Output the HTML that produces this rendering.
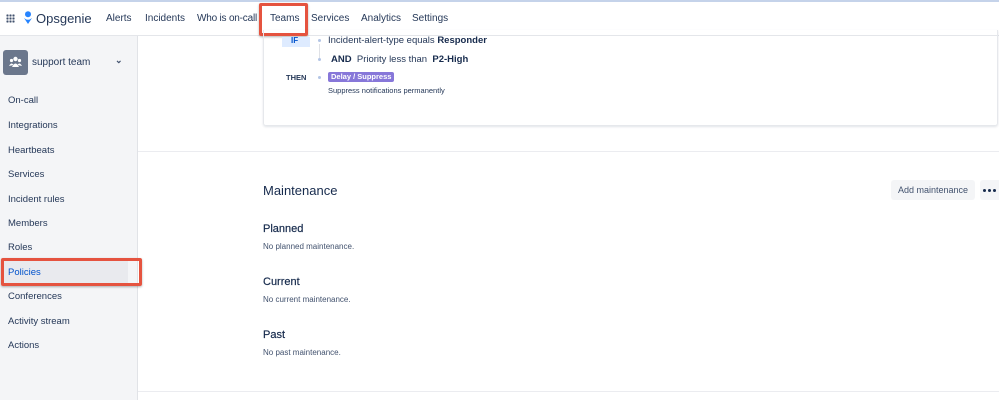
<!DOCTYPE html>
<html><head><style>
*{margin:0;padding:0;box-sizing:border-box}
body{width:999px;height:400px;overflow:hidden;font-family:"Liberation Sans",sans-serif;background:#fff;color:#172b4d;position:relative;font-size:10px}
.a{position:absolute;white-space:nowrap}
.top{position:absolute;left:0;top:0;width:999px;height:36px;border-top:2px solid #c5d3ea;border-bottom:1px solid #e4e6ea;background:#fff}
.nav{top:13px;font-size:10px;color:#253858}
.side{position:absolute;left:0;top:36px;width:138px;height:364px;background:#f4f5f7;border-right:1px solid #e1e3e7}
.si{left:8px;font-size:9.5px;color:#253858}
.red{position:absolute;border:3px solid #e5533f;border-radius:2px}
.card{position:absolute;left:263px;top:30px;width:735px;height:96px;border:1px solid #e6e8ec;border-top:none;border-radius:0 0 3px 3px;box-shadow:0 1px 2px rgba(9,30,66,.12)}
.hr{position:absolute;left:138px;width:861px;height:1px;background:#ebecf0}
h3{font-size:11px;font-weight:normal;color:#172b4d;-webkit-text-stroke:0.2px #172b4d}
.sm{font-size:8px;color:#42526e}
</style></head><body>
<div class="top"></div>
<div class="a" style="left:6px;top:14px;width:9px;height:9px;background:
radial-gradient(circle,#42526e 1px,transparent 1.3px) 0 0/3px 3px"></div>
<svg class="a" style="left:23px;top:11px" width="10" height="13" viewBox="0 0 10 13"><circle cx="5" cy="3.2" r="3" fill="#2684ff"/><path d="M1 7 Q5 10.5 9 7 L5 13 Z" fill="#2684ff"/></svg>
<div class="a" style="left:36px;top:11px;font-size:13px;color:#253858">Opsgenie</div>
<div class="a nav" style="left:106px">Alerts</div>
<div class="a nav" style="left:145px">Incidents</div>
<div class="a nav" style="left:197px;letter-spacing:-0.2px">Who is on-call</div>
<div class="a nav" style="left:270px">Teams</div>
<div class="a nav" style="left:311px">Services</div>
<div class="a nav" style="left:361px">Analytics</div>
<div class="a nav" style="left:412px">Settings</div>
<div class="a" style="left:268px;top:33px;width:33px;height:3px;background:#0052cc"></div>
<div class="red" style="left:259px;top:3px;width:49px;height:33px;box-shadow:0 1px 2px rgba(0,0,0,.3)"></div>

<div class="side"></div>
<div class="a" style="left:3px;top:50px;width:25px;height:25px;background:#6b778c;border-radius:3px"></div>
<svg class="a" style="left:9px;top:56px" width="13" height="12" viewBox="0 0 13 12" fill="#fff"><circle cx="6.5" cy="3" r="2.2"/><circle cx="2.5" cy="4.5" r="1.6"/><circle cx="10.5" cy="4.5" r="1.6"/><path d="M3 11 Q6.5 4 10 11Z"/><path d="M0 10 Q2.5 5.5 4.5 9Z"/><path d="M13 10 Q10.5 5.5 8.5 9Z"/></svg>
<div class="a" style="left:32px;top:57px;font-size:10px;color:#253858">support team</div>
<div class="a" style="left:115px;top:55px;font-size:9px;color:#42526e;font-weight:bold">&#8964;</div>
<div class="a si" style="top:95px">On-call</div>
<div class="a si" style="top:120px">Integrations</div>
<div class="a si" style="top:145px">Heartbeats</div>
<div class="a si" style="top:169px">Services</div>
<div class="a si" style="top:194px">Incident rules</div>
<div class="a si" style="top:218px">Members</div>
<div class="a si" style="top:242px">Roles</div>
<div class="a" style="left:3px;top:261px;width:125px;height:22px;background:#e9eaee"></div>
<div class="a si" style="top:267px;color:#0052cc">Policies</div>
<div class="red" style="left:1px;top:258px;width:141px;height:28px;box-shadow:0 1px 2px rgba(0,0,0,.3)"></div>
<div class="a si" style="top:291px">Conferences</div>
<div class="a si" style="top:316px">Activity stream</div>
<div class="a si" style="top:340px">Actions</div>

<div class="card"></div>
<div class="a" style="left:282px;top:37px;width:28px;height:10px;background:#deebff"></div>
<div class="a" style="left:291px;top:36px;font-size:8px;color:#0052cc;font-weight:bold">IF</div>
<div class="a" style="left:318px;top:39px;width:3px;height:3px;border-radius:50%;background:#b3c5e5"></div>
<div class="a" style="left:319px;top:44px;width:1px;height:14px;background:#dfe1e6"></div>
<div class="a" style="left:318px;top:58px;width:3px;height:3px;border-radius:50%;background:#b3c5e5"></div>
<div class="a" style="left:318px;top:76px;width:3px;height:3px;border-radius:50%;background:#b3c5e5"></div>
<div class="a" style="left:328px;top:35px;font-size:9.5px;color:#253858">Incident-alert-type equals <b style="color:#172b4d">Responder</b></div>
<div class="a" style="left:331px;top:54px;font-size:9.5px;color:#253858"><b style="color:#172b4d">AND</b>&nbsp; Priority less than &nbsp;<b style="color:#172b4d">P2-High</b></div>
<div class="a" style="left:286px;top:73px;font-size:7.5px;font-weight:bold;color:#253858">THEN</div>
<div class="a" style="left:328px;top:72px;height:10px;padding:0 3px;background:#8777d9;color:#fff;font-size:7.5px;font-weight:bold;line-height:10px;border-radius:2px">Delay / Suppress</div>
<div class="a" style="left:328px;top:86px;font-size:7.5px;color:#253858">Suppress notifications permanently</div>

<div class="hr" style="top:151px"></div>
<div class="a" style="left:263px;top:183px;font-size:13px;color:#172b4d">Maintenance</div>
<div class="a" style="left:891px;top:180px;width:84px;height:20px;background:#f4f5f7;border-radius:3px;font-size:9px;color:#42526e;text-align:center;line-height:20px">Add maintenance</div>
<div class="a" style="left:980px;top:180px;width:22px;height:20px;background:#f4f5f7;border-radius:3px"></div>
<div class="a" style="left:983px;top:189px;width:3px;height:3px;border-radius:50%;background:#172b4d;box-shadow:5px 0 0 #172b4d,10px 0 0 #172b4d"></div>
<h3 class="a" style="left:263px;top:223px">Planned</h3>
<div class="a sm" style="left:263px;top:242px">No planned maintenance.</div>
<h3 class="a" style="left:263px;top:276px">Current</h3>
<div class="a sm" style="left:263px;top:295px">No current maintenance.</div>
<h3 class="a" style="left:263px;top:329px">Past</h3>
<div class="a sm" style="left:263px;top:348px">No past maintenance.</div>
<div class="hr" style="top:391px"></div>
</body></html>
